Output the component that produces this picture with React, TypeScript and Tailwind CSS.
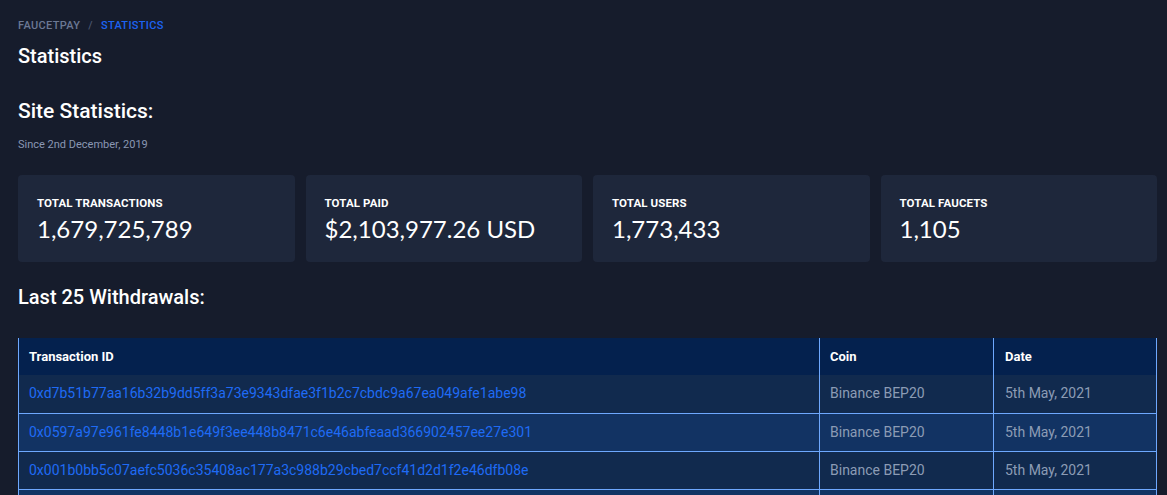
import React from 'react';

const stats = [
  { label: 'Total Transactions', value: '1,679,725,789' },
  { label: 'Total Paid', value: '$2,103,977.26 USD' },
  { label: 'Total Users', value: '1,773,433' },
  { label: 'Total Faucets', value: '1,105' },
];

const withdrawals = [
  { id: '0xd7b51b77aa16b32b9dd5ff3a73e9343dfae3f1b2c7cbdc9a67ea049afe1abe98', coin: 'Binance BEP20', date: '5th May, 2021' },
  { id: '0x0597a97e961fe8448b1e649f3ee448b8471c6e46abfeaad366902457ee27e301', coin: 'Binance BEP20', date: '5th May, 2021' },
  { id: '0x001b0bb5c07aefc5036c35408ac177a3c988b29cbed7ccf41d2d1f2e46dfb08e', coin: 'Binance BEP20', date: '5th May, 2021' },
  { id: '0x3c1e0a9f27b5d84c61e0f7a2b9d3c58e4f6a1b7c2d9e0f83a4b5c6d7e8f9a0b1', coin: 'Binance BEP20', date: '5th May, 2021' },
];

export default function App() {
  return (
    <div
      className="min-h-screen bg-[#161c2c] pl-[18px] pr-[10px] pt-[18px] text-white"
      style={{ fontFamily: 'Roboto, "Liberation Sans", sans-serif' }}
    >
      <nav className="flex items-center gap-[8px] text-[11px] font-medium uppercase tracking-[0.03em] leading-[16px]">
        <span className="text-[#6b7894]">Faucetpay</span>
        <span className="text-[#4a556e]">/</span>
        <span className="text-[#1c63f2]">Statistics</span>
      </nav>
      <h1 className="mt-[8px] text-[20px] font-medium leading-[28px]">Statistics</h1>

      <h2 className="mt-[27px] text-[21px] font-medium leading-[28px]">Site Statistics:</h2>
      <p className="mt-[12px] text-[11px] leading-[16px] text-[#8a97b3]">Since 2nd December, 2019</p>

      <div className="mt-[22px] grid grid-cols-4 gap-[11px]">
        {stats.map((s) => (
          <div key={s.label} className="h-[87px] rounded-[4px] bg-[#1e273b] px-[19px] pt-[21px]">
            <div className="text-[11.5px] font-bold uppercase leading-[14px] tracking-[0.01em]">{s.label}</div>
            <div
              className="mt-[3px] text-[24px] leading-[32px]"
              style={{ fontFamily: 'Lato, "Open Sans", sans-serif' }}
            >
              {s.value}
            </div>
          </div>
        ))}
      </div>

      <h2 className="mt-[21px] text-[20px] font-medium leading-[28px]">Last 25 Withdrawals:</h2>

      <table className="mt-[27px] w-full border-collapse text-[14px]">
        <thead>
          <tr className="h-[37px] bg-[#04214e] text-[13px]">
            <th className="w-[801px] border-l border-[#6ea8fe] px-[10px] text-left font-bold">Transaction ID</th>
            <th className="w-[174px] border-l border-[#6ea8fe] px-[10px] text-left font-bold">Coin</th>
            <th className="border-x border-[#6ea8fe] px-[11px] text-left font-bold">Date</th>
          </tr>
        </thead>
        <tbody>
          {withdrawals.map((w, i) => (
            <tr key={w.id} className={i % 2 === 0 ? 'h-[38px] bg-[#112a4e]' : 'h-[38px] bg-[#123363]'}>
              <td className="border-b border-l border-[#6ea8fe] px-[10px] text-[#1f6bf5]">{w.id}</td>
              <td className="border-b border-l border-[#6ea8fe] px-[10px] text-[#8c9cb5]">{w.coin}</td>
              <td className="border-x border-b border-[#6ea8fe] px-[11px] text-[#8c9cb5]">{w.date}</td>
            </tr>
          ))}
        </tbody>
      </table>
    </div>
  );
}
